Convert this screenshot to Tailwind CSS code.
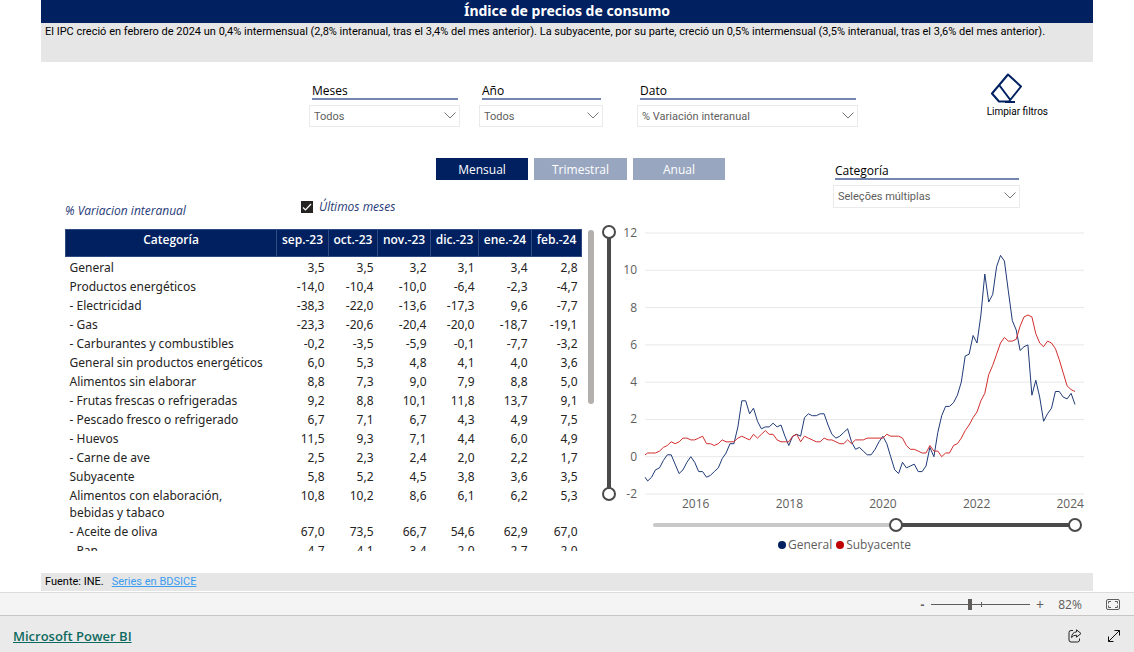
<!DOCTYPE html>
<html lang="es">
<head>
<meta charset="utf-8">
<meta name="viewport" content="width=device-width, initial-scale=1">
<title>Índice de precios de consumo</title>
<script src="https://cdn.jsdelivr.net/npm/@tailwindcss/browser@4"></script>
</head>
<body class="flex min-h-screen flex-col bg-white font-['Open_Sans','Noto_Sans',sans-serif] text-[12px] leading-[17px] text-[#252423]">

<main class="flex flex-1 flex-col px-[41px]">
  <h1 class="h-[23px] bg-[#002060] text-center font-['Noto_Sans',sans-serif] text-[14px] leading-[22px] font-bold text-white">Índice de precios de consumo</h1>
  <p class="h-[39px] bg-[#e6e6e6] px-1 font-[Roboto,sans-serif] text-[11px] leading-[17px] text-black">El IPC creció en febrero de 2024 un 0,4% intermensual (2,8% interanual, tras el 3,4% del mes anterior). La subyacente, por su parte, creció un 0,5% intermensual (3,5% interanual, tras el 3,6% del mes anterior).</p>

  <section class="flex items-start pt-[10px] pl-[268px]" aria-label="Filtros">
    <div class="w-[151px] pt-[10px]">
      <label for="meses" class="mr-[2px] ml-[3px] block h-[18px] border-b-2 border-[#7385b0] leading-[17px] text-black">Meses</label>
      <div class="relative mt-[5px]">
        <select id="meses" class="block h-[22px] w-full appearance-none border border-[#eaeaea] bg-white pl-1 font-[Roboto,sans-serif] text-[11px] text-[#605e5c]"><option>Todos</option></select>
        <svg class="pointer-events-none absolute top-[7px] right-1 h-[7px] w-[12px]" viewBox="0 0 12 7" fill="none" stroke="#777"><path d="M.5 .5 6 6 11.500 .5"/></svg>
      </div>
    </div>
    <div class="ml-[19px] w-[124px] pt-[10px]">
      <label for="anio" class="mr-[2px] ml-[3px] block h-[18px] border-b-2 border-[#7385b0] leading-[17px] text-black">Año</label>
      <div class="relative mt-[5px]">
        <select id="anio" class="block h-[22px] w-full appearance-none border border-[#eaeaea] bg-white pl-1 font-[Roboto,sans-serif] text-[11px] text-[#605e5c]"><option>Todos</option></select>
        <svg class="pointer-events-none absolute top-[7px] right-1 h-[7px] w-[12px]" viewBox="0 0 12 7" fill="none" stroke="#777"><path d="M.5 .5 6 6 11.500 .5"/></svg>
      </div>
    </div>
    <div class="ml-[34px] w-[221px] pt-[10px]">
      <label for="dato" class="mr-[2px] ml-[3px] block h-[18px] border-b-2 border-[#7385b0] leading-[17px] text-black">Dato</label>
      <div class="relative mt-[5px]">
        <select id="dato" class="block h-[22px] w-full appearance-none border border-[#eaeaea] bg-white pl-1 font-[Roboto,sans-serif] text-[11px] text-[#605e5c]"><option>% Variación interanual</option></select>
        <svg class="pointer-events-none absolute top-[7px] right-1 h-[7px] w-[12px]" viewBox="0 0 12 7" fill="none" stroke="#777"><path d="M.5 .5 6 6 11.500 .5"/></svg>
      </div>
    </div>
    <button class="mr-[45px] ml-auto flex flex-col items-center font-[Roboto,sans-serif] text-[10px] leading-[14px] text-black">
      <svg class="mr-5 h-[33px] w-[34px]" viewBox="0 0 34 33" fill="none" stroke="#002060" stroke-width="2" stroke-linejoin="round"><path d="M18 2.500 31 14.500 19 29.500H9L2 21.500ZM9.500 13.500 20 27.500M15 30H25"/></svg>
      Limpiar filtros
    </button>
  </section>

  <section class="flex pt-[31px]">
    <div class="flex-1">
      <div class="flex gap-[6px] pl-[395px]">
        <button class="h-[22px] w-[92px] bg-[#002060] text-white">Mensual</button>
        <button class="h-[22px] w-[93px] bg-[#99a6c0] text-white">Trimestral</button>
        <button class="h-[22px] w-[92px] bg-[#99a6c0] text-white">Anual</button>
      </div>
      <div class="flex items-start pt-[18px] pl-6 text-[12px] text-[#1f3a78] italic">
        <h2 class="w-[236px] pt-1">% Variacion interanual</h2>
        <label class="flex items-center gap-[6px]">
          <input type="checkbox" checked class="peer sr-only">
          <svg class="h-3 w-3" viewBox="0 0 12 12"><path fill="#252423" d="M0 0h12v12H0z"/><path d="M2 6.500 4.500 9 10 3" fill="none" stroke="#fff" stroke-width="1.200"/></svg>
          Últimos meses
        </label>
      </div>
    </div>
    <div class="mr-[73px] w-[187px] pt-1">
      <label for="categoria" class="mr-[1px] ml-[2px] block h-[18px] border-b-2 border-[#7385b0] leading-[17px] text-black">Categoría</label>
      <div class="relative mt-[5px]">
        <select id="categoria" class="block h-[23px] w-full appearance-none border border-[#eaeaea] bg-white pl-1 font-[Roboto,sans-serif] text-[11px] text-[#605e5c]"><option>Seleções múltiplas</option></select>
        <svg class="pointer-events-none absolute top-[7px] right-1 h-[7px] w-[12px]" viewBox="0 0 12 7" fill="none" stroke="#777"><path d="M.5 .5 6 6 11.500 .5"/></svg>
      </div>
    </div>
  </section>

  <section class="flex items-start pt-[10px] pl-6">
    <div class="flex h-[322px] w-[529px] justify-between overflow-hidden">
      <table class="w-[516px] table-fixed border-collapse self-start">
        <colgroup><col class="w-[211px]"><col class="w-[52px]"><col class="w-[49px]"><col class="w-[53px]"><col class="w-[48px]"><col class="w-[53px]"><col class="w-[50px]"></colgroup>
        <thead>
          <tr class="h-[27px] bg-[#002060] align-top font-semibold whitespace-nowrap text-white [&>th]:border [&>th]:border-[#2f4a80] [&>th]:pt-px [&>th]:font-semibold">
            <th>Categoría</th><th>sep.-23</th><th>oct.-23</th><th>nov.-23</th><th>dic.-23</th><th>ene.-24</th><th>feb.-24</th>
          </tr>
        </thead>
        <tbody id="filas" class="align-top font-['Noto_Sans',sans-serif]"></tbody>
      </table>
      <div class="mt-px h-[174px] w-[6px] rounded-full bg-[#b3b0ad]"></div>
    </div>

    <div class="relative ml-[9px] h-[274px] w-[12px]">
      <div class="absolute top-[3px] left-1 h-[262px] w-1 bg-[#4a4a4a]"></div>
      <input type="range" aria-label="Máximo del eje" min="-2" max="12" value="12" class="pointer-events-none absolute -top-[4px] -left-px h-[276px] w-[14px] appearance-none bg-transparent [direction:rtl] [writing-mode:vertical-lr] [&::-webkit-slider-thumb]:h-[14px] [&::-webkit-slider-thumb]:w-[14px] [&::-webkit-slider-thumb]:appearance-none [&::-webkit-slider-thumb]:rounded-full [&::-webkit-slider-thumb]:border-2 [&::-webkit-slider-thumb]:border-[#4a4a4a] [&::-webkit-slider-thumb]:bg-white">
      <input type="range" aria-label="Mínimo del eje" min="-2" max="12" value="-2" class="pointer-events-none absolute -top-[4px] -left-px h-[276px] w-[14px] appearance-none bg-transparent [direction:rtl] [writing-mode:vertical-lr] [&::-webkit-slider-thumb]:h-[14px] [&::-webkit-slider-thumb]:w-[14px] [&::-webkit-slider-thumb]:appearance-none [&::-webkit-slider-thumb]:rounded-full [&::-webkit-slider-thumb]:border-2 [&::-webkit-slider-thumb]:border-[#4a4a4a] [&::-webkit-slider-thumb]:bg-white">
    </div>

    <div class="mr-[9px] flex-1 text-[#605e5c]">
      <div class="flex h-[265px]">
        <div class="-mt-[5px] flex h-[278px] w-[22px] flex-col justify-between text-right">
          <span>12</span><span>10</span><span>8</span><span>6</span><span>4</span><span>2</span><span>0</span><span>-2</span>
        </div>
        <svg id="grafico" class="mt-1 ml-2 h-[261px] min-w-0 flex-1 overflow-visible" viewBox="0 0 439 261" preserveAspectRatio="none" fill="none" role="img" aria-label="IPC general y subyacente"></svg>
      </div>
      <div class="flex justify-between pt-[1px] pl-[67px]">
        <span>2016</span><span>2018</span><span>2020</span><span>2022</span><span>2024</span>
      </div>
      <div class="relative mt-[6px] mr-[2px] ml-[38px] h-[14px]">
        <div class="absolute top-[5px] right-[7px] left-0 h-1 rounded-full bg-[#c8c8c8]"></div>
        <div class="absolute top-[5px] right-[7px] left-[57%] h-1 bg-[#4a4a4a]"></div>
        <input type="range" aria-label="Inicio del periodo" min="0" max="1000" value="568" class="pointer-events-none absolute inset-0 h-[14px] w-full appearance-none bg-transparent [&::-webkit-slider-thumb]:h-[14px] [&::-webkit-slider-thumb]:w-[14px] [&::-webkit-slider-thumb]:appearance-none [&::-webkit-slider-thumb]:rounded-full [&::-webkit-slider-thumb]:border-2 [&::-webkit-slider-thumb]:border-[#4a4a4a] [&::-webkit-slider-thumb]:bg-white">
        <input type="range" aria-label="Fin del periodo" min="0" max="1000" value="1000" class="pointer-events-none absolute inset-0 h-[14px] w-full appearance-none bg-transparent [&::-webkit-slider-thumb]:h-[14px] [&::-webkit-slider-thumb]:w-[14px] [&::-webkit-slider-thumb]:appearance-none [&::-webkit-slider-thumb]:rounded-full [&::-webkit-slider-thumb]:border-2 [&::-webkit-slider-thumb]:border-[#4a4a4a] [&::-webkit-slider-thumb]:bg-white">
      </div>
      <div class="flex items-center justify-center gap-1 pt-1 pr-[10px]">
        <span class="flex items-center gap-[2px]"><i class="h-2 w-2 rounded-full bg-[#002060]"></i>General</span>
        <span class="flex items-center gap-[2px]"><i class="h-2 w-2 rounded-full bg-[#c00000]"></i>Subyacente</span>
      </div>
    </div>
  </section>

  <footer class="mt-auto mb-px flex h-[18px] gap-2 bg-[#e6e6e6] px-1 font-[Roboto,sans-serif] text-[11px] leading-[17px] text-black">
    <span>Fuente: INE.</span><a href="#" class="text-[#3b9cf0] underline">Series en BDSICE</a>
  </footer>
</main>

<div class="flex h-6 items-center justify-end border-t border-b border-t-[#dcdcdc] border-b-[#c8c6c4] bg-[#f4f4f4] pr-[14px] text-[#605e5c]">
  <button aria-label="Alejar" class="mr-1 w-[9px] font-bold">-</button>
  <div class="relative h-4 w-[99px]">
    <div class="absolute top-2 right-0 left-0 h-px bg-[#605e5c]"></div>
    <div class="absolute top-[6px] left-[50px] h-[5px] w-px bg-[#605e5c]"></div>
    <input type="range" aria-label="Zoom" min="0" max="100" value="39" class="absolute inset-0 h-4 w-full appearance-none bg-transparent [&::-webkit-slider-thumb]:h-[11px] [&::-webkit-slider-thumb]:w-1 [&::-webkit-slider-thumb]:appearance-none [&::-webkit-slider-thumb]:bg-[#605e5c]">
  </div>
  <button aria-label="Acercar" class="ml-[5px] w-[10px] text-[14px]">+</button>
  <button class="ml-3 w-[26px]">82%</button>
  <button aria-label="Ajustar a la página" class="ml-[23px]">
    <svg class="h-[11px] w-[14px]" viewBox="0 0 14 11" fill="none" stroke="#605e5c"><rect x=".5" y=".5" width="13" height="10" rx="1.500"/><path d="M5 2.500H2.500V4.500M9 2.500h2.500V4.500M5 8.500H2.500V6.500M9 8.500h2.500V6.500"/></svg>
  </button>
</div>
<div class="flex h-9 items-center bg-[#eaeaea] pt-1 pr-[14px] pl-[13px]">
  <a href="#" class="text-[13px] font-semibold text-[#0e6a60] underline">Microsoft Power BI</a>
  <button aria-label="Compartir" class="ml-auto">
    <svg class="h-[14px] w-[14px]" viewBox="0 0 14 14" fill="none" stroke="#222" stroke-linejoin="round"><path d="M5 1.500H3Q1 1.500 1 3.500V11Q1 13 3 13H9.500Q11.500 13 11.500 11V9.500"/><path d="M8.500 .8 13 4.500 8.500 8.200V6.200Q5.500 6 3.500 8.500 4 3.200 8.500 2.900Z"/></svg>
  </button>
  <button aria-label="Pantalla completa" class="ml-[26px]">
    <svg class="h-[12px] w-[12px]" viewBox="0 0 12 12" fill="none" stroke="#111"><path d="M6.500 .5h5V5.500M.5 6.500v5H5.500M11.500 .5 .5 11.500"/></svg>
  </button>
</div>

<script>
const filas = [
  ['General','3,5','3,5','3,2','3,1','3,4','2,8'],
  ['Productos energéticos','-14,0','-10,4','-10,0','-6,4','-2,3','-4,7'],
  ['- Electricidad','-38,3','-22,0','-13,6','-17,3','9,6','-7,7'],
  ['- Gas','-23,3','-20,6','-20,4','-20,0','-18,7','-19,1'],
  ['- Carburantes y combustibles','-0,2','-3,5','-5,9','-0,1','-7,7','-3,2'],
  ['General sin productos energéticos','6,0','5,3','4,8','4,1','4,0','3,6'],
  ['Alimentos sin elaborar','8,8','7,3','9,0','7,9','8,8','5,0'],
  ['- Frutas frescas o refrigeradas','9,2','8,8','10,1','11,8','13,7','9,1'],
  ['- Pescado fresco o refrigerado','6,7','7,1','6,7','4,3','4,9','7,5'],
  ['- Huevos','11,5','9,3','7,1','4,4','6,0','4,9'],
  ['- Carne de ave','2,5','2,3','2,4','2,0','2,2','1,7'],
  ['Subyacente','5,8','5,2','4,5','3,8','3,6','3,5'],
  ['Alimentos con elaboración, bebidas y tabaco','10,8','10,2','8,6','6,1','6,2','5,3'],
  ['- Aceite de oliva','67,0','73,5','66,7','54,6','62,9','67,0'],
  ['- Pan','4,7','4,1','3,4','2,0','2,7','2,0']
];
document.getElementById('filas').innerHTML = filas.map(([nombre, ...v]) =>
  `<tr><td class="pt-[2px] pr-2 pl-1">${nombre}</td>` +
  v.map(n => `<td class="pt-[2px] pr-1 text-right">${n}</td>`).join('') + '</tr>').join('');

// Monthly series, January 2015 to February 2024
const general = [-1.3,-1.1,-.7,-.6,-.2,.1,.1,-.4,-.9,-.7,-.3,0, -.3,-.8,-.8,-1.1,-1,-.8,-.6,-.1,.2,.7,.7,1.6,
  3,3,2.3,2.6,1.9,1.5,1.6,1.6,1.8,1.6,1.7,1.1, .6,1.1,1.2,1.1,2.1,2.3,2.2,2.2,2.3,2.3,1.7,1.2,
  1,1.1,1.3,1.5,.8,.4,.5,.3,.1,.1,.4,.8, 1.1,.7,0,-.7,-.9,-.3,-.6,-.5,-.4,-.8,-.8,-.5,
  .5,0,1.3,2.2,2.7,2.7,2.9,3.3,4,5.4,5.5,6.5, 6.1,7.6,9.8,8.3,8.7,10.2,10.8,10.5,8.9,7.3,6.8,5.7,
  5.9,6,3.3,4.1,3.2,1.9,2.3,2.6,3.5,3.5,3.2,3.1, 3.4,2.8];
const subyacente = [.2,.2,.2,.3,.5,.6,.8,.7,.8,1,1,.9, .9,1,1.1,.7,.7,.6,.7,.9,.8,.8,.8,1,
  1.1,1,.9,1.2,1,1.2,1.4,1.2,1.2,.9,.8,.8, .8,1.1,1.2,.8,1.1,1,.9,.8,.8,1,.9,.9,
  .8,.7,.7,.9,.7,.9,.9,.9,1,1,1,1, 1,1.2,1.1,1.1,1.1,1,.6,.4,.4,.3,.2,.2,
  .6,.3,.3,0,.2,.2,.6,.7,1,1.4,1.7,2.1, 2.4,3,3.4,4.4,4.9,5.5,6.1,6.4,6.2,6.2,6.3,7,
  7.5,7.6,7.5,6.6,6.1,5.9,6.2,6.1,5.8,5.2,4.5,3.8, 3.6,3.5];
const y = v => (12 - v) / 14 * 261;
const linea = (inicio, datos, color) => {
  const puntos = [[0, y(inicio)], ...datos.map((v, i) => [2.7 + i * 3.92, y(v)])];
  return `<polyline points="${puntos.map(p => p.map(n => n.toFixed(1)).join()).join(' ')}" stroke="${color}" vector-effect="non-scaling-stroke"/>`;
};
let dibujo = '';
for (let v = -2; v <= 12; v += 2) dibujo += `<path d="M0 ${y(v)}H439" stroke="#e8e8e8" vector-effect="non-scaling-stroke"/>`;
document.getElementById('grafico').innerHTML = dibujo + linea(-1.1, general, '#1f3a78') + linea(.1, subyacente, '#d22d2d');
</script>
</body>
</html>
